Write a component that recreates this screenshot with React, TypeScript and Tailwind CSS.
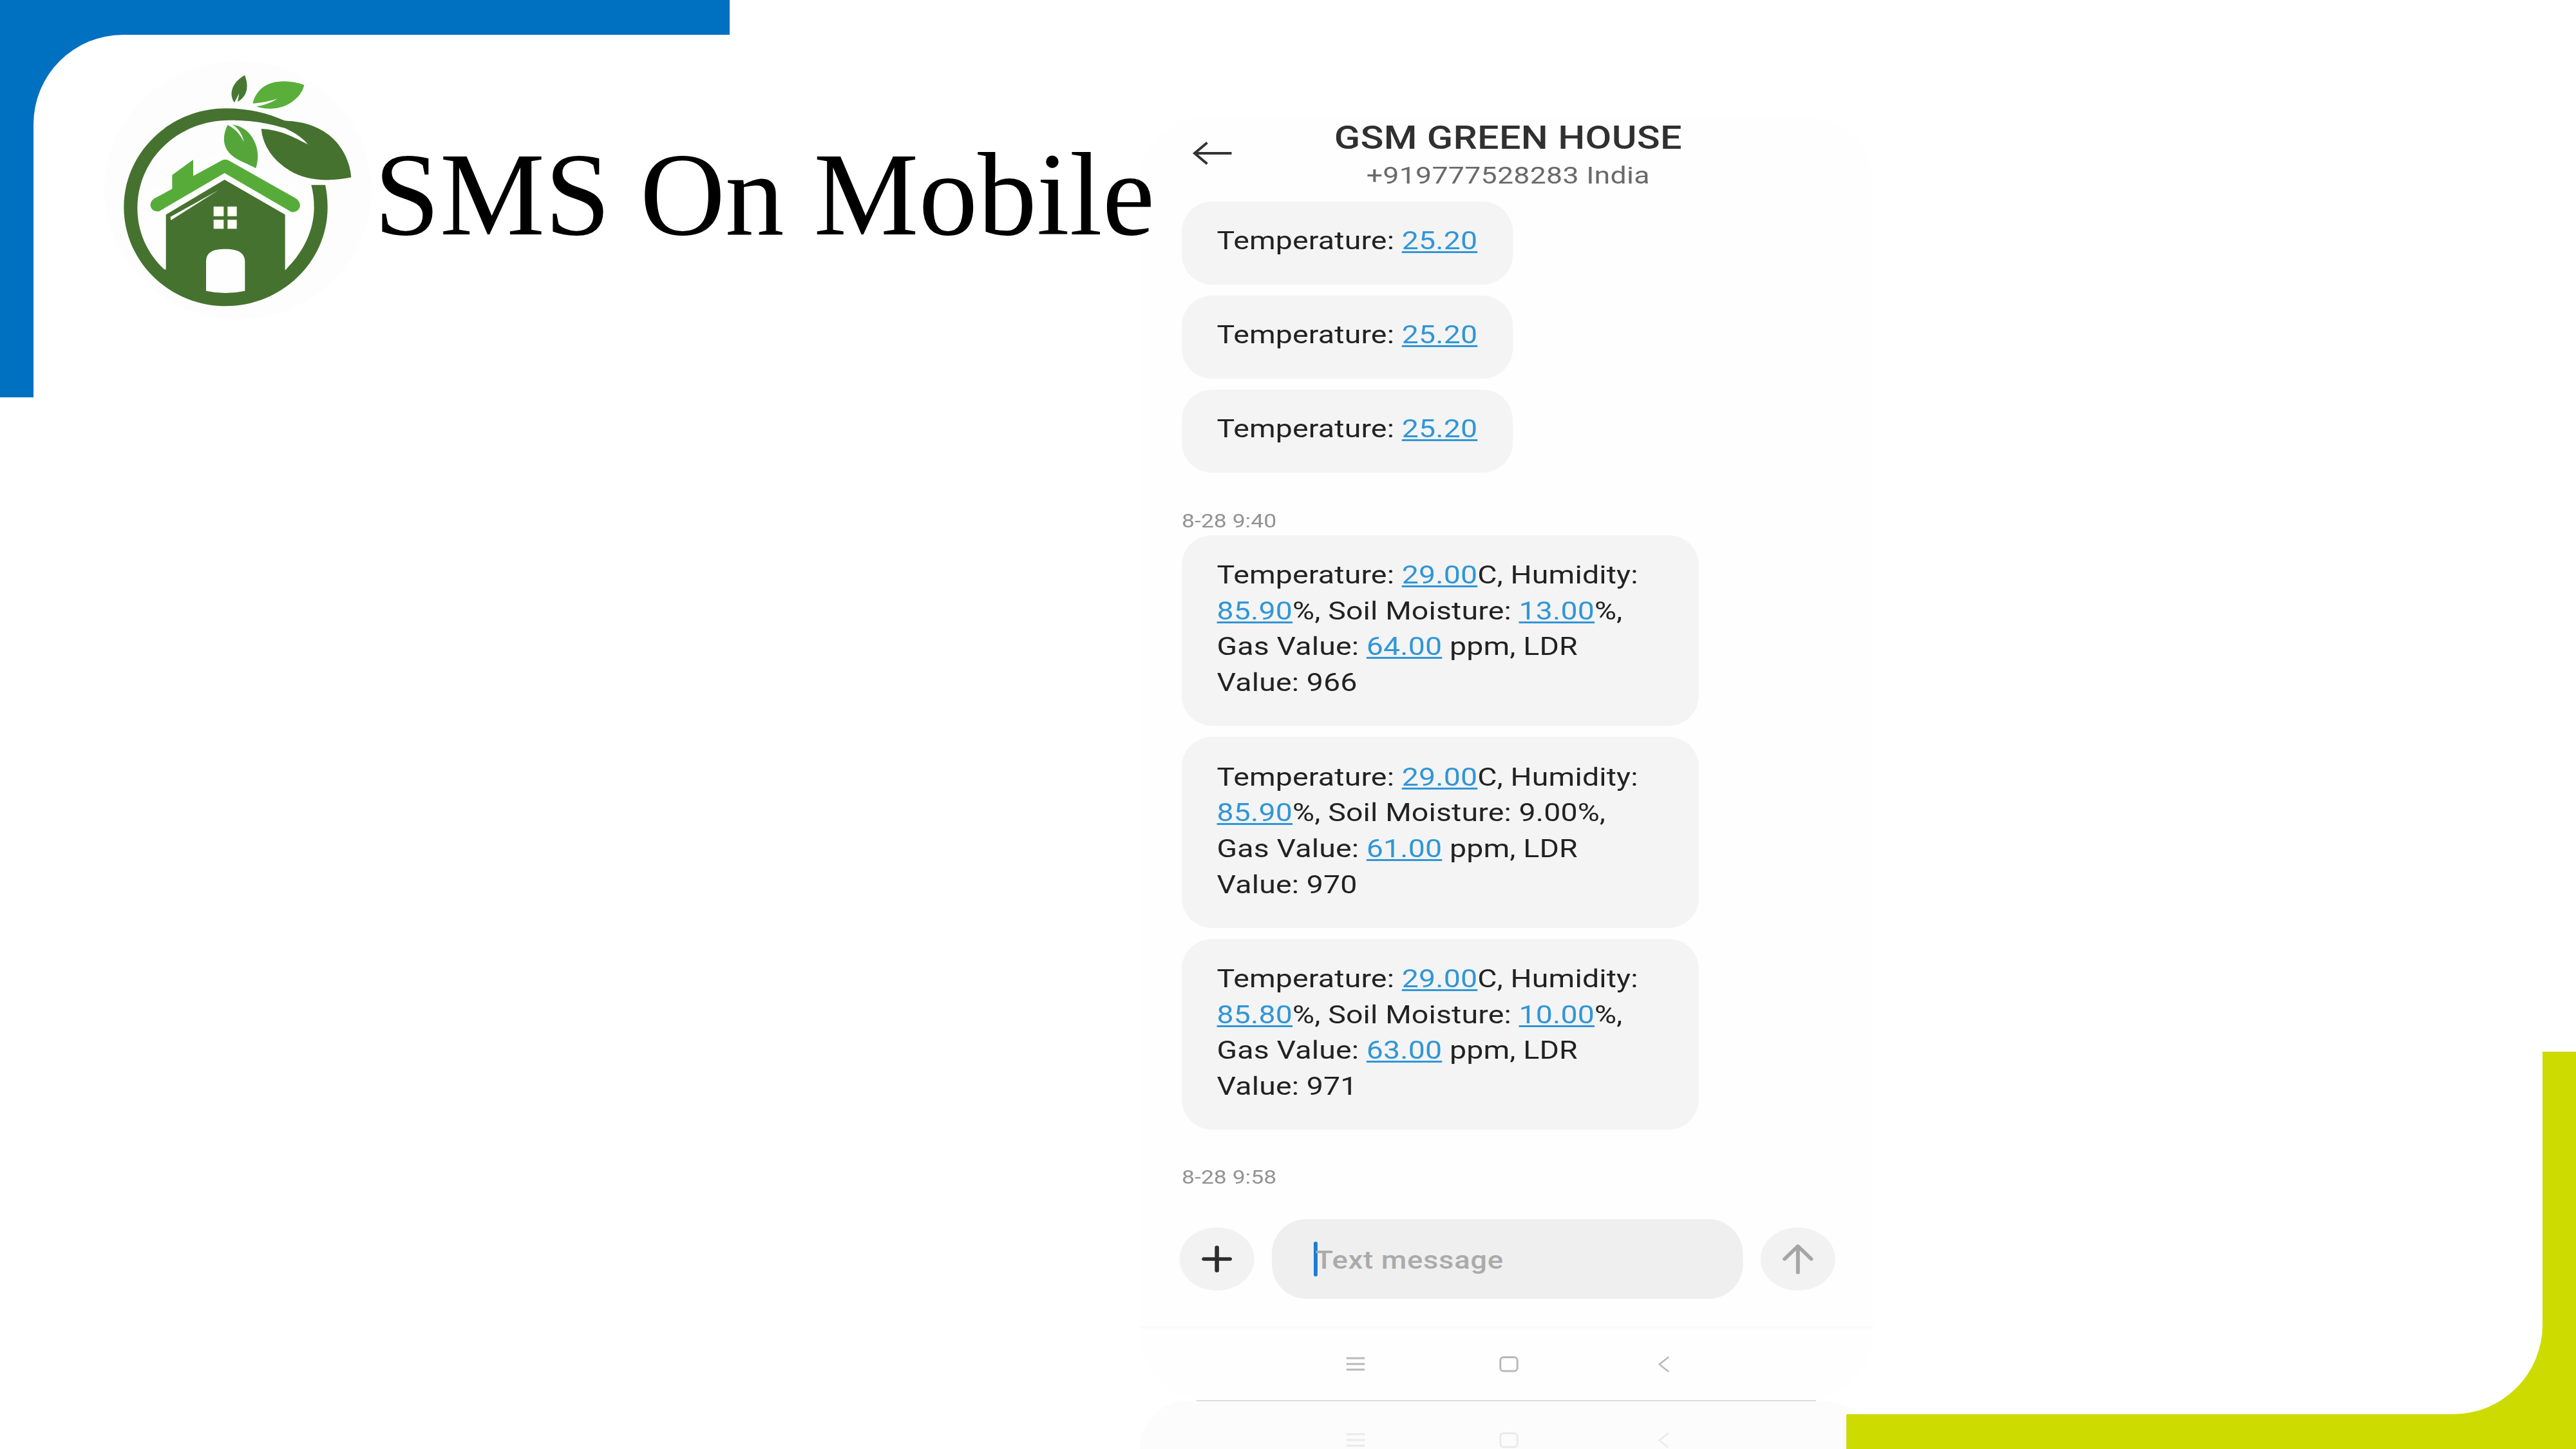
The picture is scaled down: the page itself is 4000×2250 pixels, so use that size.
import React from "react";

type Part = string | { link: string };

const L = (link: string): Part => ({ link });

const shortMessage: Part[][] = [["Temperature: ", L("25.20")]];

const longMessages: Part[][][] = [
  [
    ["Temperature: ", L("29.00"), "C, Humidity:"],
    [L("85.90"), "%, Soil Moisture: ", L("13.00"), "%,"],
    ["Gas Value: ", L("64.00"), " ppm, LDR"],
    ["Value: 966"],
  ],
  [
    ["Temperature: ", L("29.00"), "C, Humidity:"],
    [L("85.90"), "%, Soil Moisture: 9.00%,"],
    ["Gas Value: ", L("61.00"), " ppm, LDR"],
    ["Value: 970"],
  ],
  [
    ["Temperature: ", L("29.00"), "C, Humidity:"],
    [L("85.80"), "%, Soil Moisture: ", L("10.00"), "%,"],
    ["Gas Value: ", L("63.00"), " ppm, LDR"],
    ["Value: 971"],
  ],
];

function Lines({ lines }: { lines: Part[][] }) {
  return (
    <>
      {lines.map((parts, i) => (
        <div key={i} className="whitespace-pre">
          {parts.map((p, j) =>
            typeof p === "string" ? (
              <span key={j}>{p}</span>
            ) : (
              <span key={j} className="text-[#3196d6] underline decoration-[3px] underline-offset-[3px] [text-decoration-skip-ink:none]">
                {p.link}
              </span>
            )
          )}
        </div>
      ))}
    </>
  );
}

function Logo() {
  return (
    <svg viewBox="0 0 1260 1230" className="h-[410px] w-[420px] shrink-0">
      <ellipse cx="628" cy="615" rx="622" ry="602" fill="#fdfdfd" />
      {/* ring */}
      <path
        fill="#46722f"
        d="M845 292C770 258 680 235 572 235C312 235 97 440 97 695C97 950 312 1156 572 1156C832 1156 1046 950 1046 697C1046 660 1043 626 1035 592L970 592C979 625 983 660 983 697C983 805 930 910 850 985L285 985C205 910 160 810 160 700C160 470 350 290 590 290C700 290 770 305 840 325Z"
      />
      <path fill="#fefefe" d="M292 988L292 730L565 565L848 730L848 990L900 930L960 800L960 640L570 420L180 640L180 800Z" />
      {/* large leaf */}
      <path
        fill="#46722f"
        d="M780 270C810 283 830 291 858 293C930 296 1000 315 1060 365C1115 412 1150 480 1156 556C1060 576 950 575 870 525C790 475 745 410 737 330C830 335 890 370 955 403C915 355 850 320 760 300Z"
      />
      {/* small leaves */}
      <path fill="#487733" d="M660 80C682 135 670 180 627 204L634 165L612 208C585 170 598 115 660 80Z" />
      <path fill="#5aaf3a" d="M937 126C870 100 780 100 735 145C712 168 702 190 698 212C740 210 780 200 812 190C785 208 750 220 714 226C750 240 810 240 850 222C895 202 930 165 937 126Z" />
      <path fill="#55a63a" d="M580 312C558 360 555 405 590 445C625 480 670 490 712 514C728 460 722 415 695 370C675 338 645 318 604 310C630 330 650 355 656 392C640 355 615 330 580 312Z" />
      {/* roof and chimney */}
      <path
        fill="#57ac39"
        d="M236 656L322 610L322 545L420 474L420 550L548 480Q568 466 590 480L898 654C935 680 915 722 878 718L566 536L262 714C225 722 205 680 236 656Z"
      />
      {/* house */}
      <path fill="#46722f" d="M293 730L566 567L848 730L848 1000L800 1060L340 1060L293 1000Z" />
      <path fill="#fefefe" d="M314 740L540 614L316 756Z" />
      <path fill="#fbfff4" d="M515 692h47v45h-47zM580 692h43v45h-43zM515 754h47v42h-47zM580 754h43v42h-43z" />
      <path fill="#fefefe" d="M480 1085L480 950C480 905 510 890 571 890C632 890 661 910 661 950L661 1085Q571 1105 480 1085Z" />
    </svg>
  );
}

function NavIcons() {
  return (
    <svg viewBox="2080 2100 530 36" preserveAspectRatio="none" className="ml-[262px] h-[36px] w-[447.6px] shrink-0" fill="none" stroke="#b9b9b9">
      <path strokeWidth="3" d="M2090.500 2109H2119M2090.500 2118H2119M2090.500 2126.700H2119" />
      <rect x="2329.500" y="2107.500" width="26.500" height="21.500" rx="5" strokeWidth="3" />
      <path strokeWidth="2.500" d="M2591 2107L2576.500 2118.500L2591 2130" />
    </svg>
  );
}

function Phone() {
  return (
    <section className="relative flex h-[2250px] w-[961px] origin-left scale-x-[1.184] flex-col overflow-hidden font-['Roboto',sans-serif] text-[#222222]">
      <div className="mt-[180px] flex h-[1994px] flex-none flex-col rounded-[90px/100px] bg-[#fefefe]">
        <header className="flex h-[133px] flex-none">
          <svg viewBox="0 0 64 40" preserveAspectRatio="none" className="ml-[68.400px] mt-[38px] h-[40px] w-[54px]" fill="none" stroke="#333333">
            <path strokeWidth="4" d="M4 20H62M24 3.500L4.500 20L24 36.500" />
          </svg>
          <div className="ml-[66px] w-[589px] pt-[8px] text-center">
            <h2 className="h-[52px] whitespace-nowrap text-[50px] font-medium leading-[52px] tracking-[0.3px] text-[#303030]">GSM GREEN HOUSE</h2>
            <p className="mt-[10px] whitespace-nowrap text-[37.700px] leading-[44px] tracking-[0.25px] text-[#6a6a6a]">+919777528283 India</p>
          </div>
        </header>

        <div className="ml-[55px] flex flex-none flex-col items-start text-[39.200px] leading-[55.700px] tracking-[0.15px]">
          <div className="flex flex-col gap-[17.500px]">
            {[0, 1, 2].map((i) => (
              <div key={i} className="h-[128.500px] w-[434px] rounded-[40px/46px] bg-[#f4f4f4] pl-[46px] pt-[34px]">
                <Lines lines={shortMessage} />
              </div>
            ))}
          </div>
          <div className="mt-[55px] h-[41px] text-[30px] leading-[40px] tracking-normal text-[#929292]">8-28 9:40</div>
          <div className="mt-[1px] flex flex-col gap-[17px]">
            {longMessages.map((m, i) => (
              <div key={i} className="h-[296.500px] w-[678px] rounded-[40px/46px] bg-[#f4f4f4] pl-[46px] pt-[35.500px]">
                <Lines lines={m} />
              </div>
            ))}
          </div>
          <div className="mt-[54px] h-[40px] text-[30px] leading-[40px] tracking-normal text-[#929292]">8-28 9:58</div>
        </div>

        <div className="mt-[45px] flex h-[124px] flex-none items-center pl-[52px]">
          <div className="flex size-[98px] items-center justify-center rounded-full bg-[#f2f2f2]">
            <svg viewBox="0 0 40 42" className="h-[42px] w-[40px]" stroke="#2c2c2c" strokeWidth="5.500" strokeLinecap="round">
              <path d="M20 3V39M3 21H37" />
            </svg>
          </div>
          <div className="ml-[22.500px] flex h-[124px] w-[618.500px] items-center rounded-[46px/54px] bg-[#efefef] pl-[55.500px]">
            <div className="h-[54px] w-[5px] rounded-full bg-[#1c7cd5]" />
            <span className="-ml-[3px] mt-[4px] whitespace-nowrap text-[38.300px] font-medium tracking-[0.6px] text-[#ababab]">Text message</span>
          </div>
          <div className="ml-[22.500px] flex size-[98px] items-center justify-center rounded-full bg-[#f2f2f2]">
            <svg viewBox="0 0 44 48" className="h-[48px] w-[44px]" fill="none" stroke="#a5a5a5" strokeWidth="5" strokeLinecap="round" strokeLinejoin="round">
              <path d="M22 4V45M4.500 24L22 4L39.500 24" />
            </svg>
          </div>
        </div>
        <div className="mt-[42px] h-[4px] flex-none bg-[#fafafa]" />
        <div className="mt-[37px] flex flex-none">
          <NavIcons />
        </div>
      </div>
      <div className="mx-[74px] h-[2px] flex-none bg-[#dcdcdc]" />
      <div className="flex h-[74px] flex-none rounded-t-[90px_110px] bg-[#fcfcfc] pt-[42px]">
        <div className="flex opacity-25">
          <NavIcons />
        </div>
      </div>
    </section>
  );
}

export default function App() {
  return (
    <main className="relative flex h-[2250px] w-[4000px] overflow-hidden bg-white">
      <div className="absolute left-0 top-0 flex h-[617px] w-[1133px] bg-[#0070c0] pl-[52px] pt-[54.400px]">
        <div className="flex-1 rounded-tl-[139px] bg-white" />
      </div>

      <div className="relative flex w-[1770px] flex-none items-start pl-[160px] pt-[90px]">
        <Logo />
        <h1 className="relative z-10 mt-[113px] whitespace-nowrap pl-[1px] font-['Liberation_Serif',serif] text-[183.300px] leading-[200px] text-black">
          SMS On Mobile
        </h1>
      </div>
      <Phone />

      {/* the frame's inner area stays transparent, its shadow paints the corner */}
      <div className="absolute bottom-0 right-0 flex h-[617px] w-[1133px] overflow-hidden pb-[54.400px] pr-[52px]">
        <div className="-ml-[300px] -mt-[300px] flex-1 rounded-br-[139px] shadow-[0_0_0_200px_#cedb00]" />
      </div>
    </main>
  );
}
